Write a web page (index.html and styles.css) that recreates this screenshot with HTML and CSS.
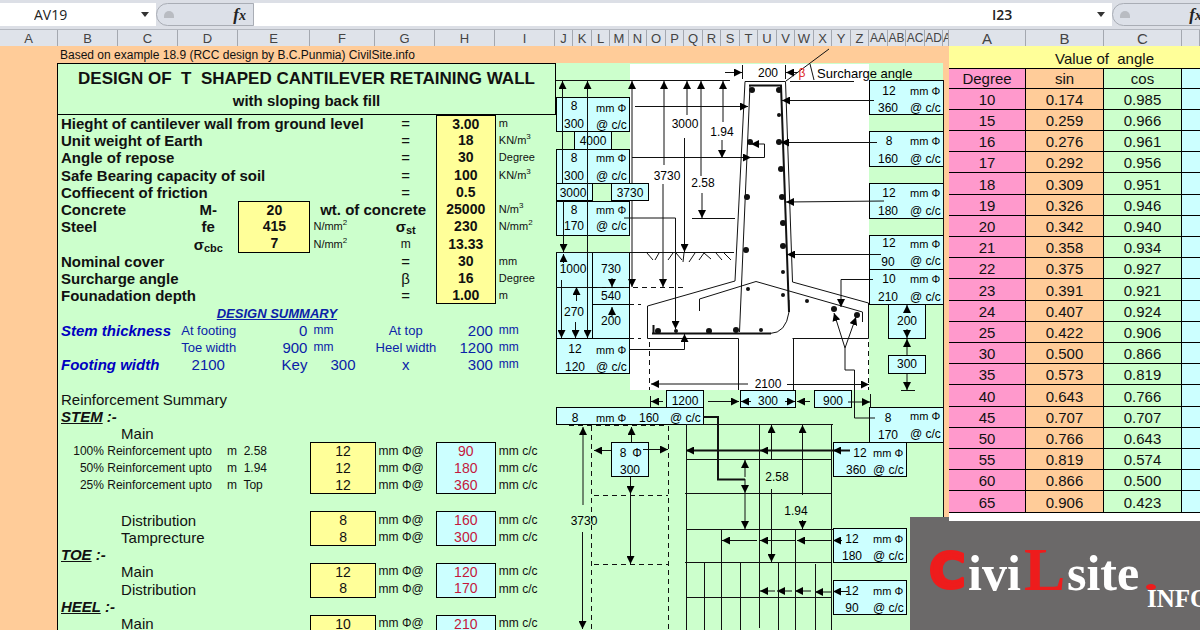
FILE: index.html
```
<!DOCTYPE html>
<html lang="en">
<head>
  <meta charset="UTF-8">
  <meta name="viewport" content="width=device-width, initial-scale=1.0">
  <title>Design of T Shaped Cantilever Retaining Wall</title>
  <link rel="stylesheet" href="styles.css">
</head>
<body>
  <div class="screen">

    <!-- design sheet -->
    <main class="book design">
      <div class="formula-bar">
        <input class="name-box" type="text" value="AV19" aria-label="Name box">
        <button class="drop" type="button" aria-label="Open name list"></button>
        <div class="fx-area"><span class="knob"></span><button class="fx" type="button">f<small>x</small></button></div>
        <input class="formula" type="text" aria-label="Formula">
      </div>
      <div class="heads">
        <span>A</span><span>B</span><span>C</span><span>D</span><span>E</span><span>F</span><span>G</span><span>H</span><span>I</span>
        <span>J</span><span>K</span><span>L</span><span>M</span><span>N</span><span>O</span><span>P</span><span>Q</span><span>R</span><span>S</span><span>T</span><span>U</span><span>V</span><span>W</span><span>X</span><span>Y</span><span>Z</span><span>AA</span><span>AB</span><span>AC</span><span>AD</span><span>A</span>
      </div>
      <div class="sheet">
        <section class="calc">
          <p class="source">Based on example 18.9 (RCC design by B.C.Punmia) CivilSite.info</p>
          <header class="title">
            <h1>DESIGN OF&nbsp; T&nbsp; SHAPED CANTILEVER RETAINING WALL</h1>
            <h2>with sloping back fill</h2>
          </header>
          <table class="data">
            <colgroup><col class="w60"><col class="w60"><col class="w60"><col class="w72"><col class="w65"><col class="w60"><col class="w60"><col class="w60"></colgroup>
            <tbody>
              <tr><th colspan="5">Hieght of cantilever wall from ground level</th><td class="mid">=</td><td class="in top">3.00</td><td class="unit">m</td></tr>
              <tr><th colspan="5">Unit weight of Earth</th><td class="mid">=</td><td class="in">18</td><td class="unit">KN/m<sup>3</sup></td></tr>
              <tr><th colspan="5">Angle of repose</th><td class="mid">=</td><td class="in">30</td><td class="unit">Degree</td></tr>
              <tr><th colspan="5">Safe Bearing capacity of soil</th><td class="mid">=</td><td class="in">100</td><td class="unit">KN/m<sup>3</sup></td></tr>
              <tr><th colspan="5">Coffiecent of friction</th><td class="mid">=</td><td class="in">0.5</td><td></td></tr>
              <tr><th colspan="2">Concrete</th><td class="mid bold">M-</td><td class="in top">20</td><td class="mid bold" colspan="2">wt. of concrete</td><td class="in">25000</td><td class="unit">N/m<sup>3</sup></td></tr>
              <tr><th colspan="2">Steel</th><td class="mid bold">fe</td><td class="in">415</td><td class="unit">N/mm<sup>2</sup></td><td class="mid bold">σ<sub>st</sub></td><td class="in">230</td><td class="unit">N/mm<sup>2</sup></td></tr>
              <tr><td colspan="2"></td><td class="mid bold">σ<sub>cbc</sub></td><td class="in bottom">7</td><td class="unit">N/mm<sup>2</sup></td><td class="mid small">m</td><td class="in">13.33</td><td></td></tr>
              <tr><th colspan="5">Nominal cover</th><td class="mid">=</td><td class="in">30</td><td class="unit">mm</td></tr>
              <tr><th colspan="5">Surcharge angle</th><td class="mid">β</td><td class="in">16</td><td class="unit">Degree</td></tr>
              <tr><th colspan="5">Founadation depth</th><td class="mid">=</td><td class="in bottom">1.00</td><td class="unit">m</td></tr>
              <tr class="blue"><td colspan="2"></td><td class="mid summary" colspan="3">DESIGN SUMMARY</td><td colspan="3"></td></tr>
              <tr class="blue"><th colspan="2">Stem thickness</th><td class="note">At footing</td><td class="num">0</td><td class="small">mm</td><td class="mid note">At top</td><td class="num">200</td><td class="small">mm</td></tr>
              <tr class="blue"><td colspan="2"></td><td class="note">Toe width</td><td class="num">900</td><td class="small">mm</td><td class="mid note tight">Heel width</td><td class="num">1200</td><td class="small">mm</td></tr>
              <tr class="blue"><th colspan="2">Footing width</th><td class="mid">2100</td><td class="num">Key</td><td class="mid">300</td><td class="mid">x</td><td class="num">300</td><td class="small">mm</td></tr>
              <tr><td colspan="8"></td></tr>
              <tr><td colspan="8">Reinforcement Summary</td></tr>
              <tr><td class="part" colspan="8"><u>STEM</u> :-</td></tr>
              <tr><td></td><td colspan="7">Main</td></tr>
              <tr><td class="small" colspan="4"><span class="upto">100% Reinforcement upto</span>m&nbsp; 2.58</td><td class="in dia top">12</td><td class="small">mm Φ@</td><td class="out top">90</td><td class="small">mm c/c</td></tr>
              <tr><td class="small" colspan="4"><span class="upto">50% Reinforcement upto</span>m&nbsp; 1.94</td><td class="in dia">12</td><td class="small">mm Φ@</td><td class="out">180</td><td class="small">mm c/c</td></tr>
              <tr><td class="small" colspan="4"><span class="upto">25% Reinforcement upto</span>m&nbsp; Top</td><td class="in dia bottom">12</td><td class="small">mm Φ@</td><td class="out bottom">360</td><td class="small">mm c/c</td></tr>
              <tr><td colspan="8"></td></tr>
              <tr><td></td><td colspan="3">Distribution</td><td class="in dia top">8</td><td class="small">mm Φ@</td><td class="out top">160</td><td class="small">mm c/c</td></tr>
              <tr><td></td><td colspan="3">Tamprecture</td><td class="in dia bottom">8</td><td class="small">mm Φ@</td><td class="out bottom">300</td><td class="small">mm c/c</td></tr>
              <tr><td class="part" colspan="8"><u>TOE</u> :-</td></tr>
              <tr><td></td><td colspan="3">Main</td><td class="in dia top">12</td><td class="small">mm Φ@</td><td class="out top">120</td><td class="small">mm c/c</td></tr>
              <tr><td></td><td colspan="3">Distribution</td><td class="in dia bottom">8</td><td class="small">mm Φ@</td><td class="out bottom">170</td><td class="small">mm c/c</td></tr>
              <tr><td class="part" colspan="8"><u>HEEL</u> :-</td></tr>
              <tr><td></td><td colspan="3">Main</td><td class="in dia top">10</td><td class="small">mm Φ@</td><td class="out top">210</td><td class="small">mm c/c</td></tr>
            </tbody>
          </table>
        </section>

        <!-- wall section and reinforcement drawing -->
        <svg class="drawing" viewBox="556 46 393 584" role="img" aria-label="Retaining wall section">
          <defs>
            <marker id="a" viewBox="0 0 8 8" refX="8" refY="4" markerWidth="8" markerHeight="8" markerUnits="userSpaceOnUse" orient="auto-start-reverse"><path d="M0 0L8 4L0 8z"/></marker>
          </defs>
          <rect class="green" x="556" y="63" width="387" height="567"/>
          <rect class="white" x="630" y="64" width="239" height="326"/>

          <g class="box">
            <rect x="556.5" y="97.5" width="73" height="34"/>
            <rect x="574.5" y="131.5" width="37" height="18"/>
            <rect x="556.5" y="149.5" width="73" height="34"/>
            <rect x="556.5" y="183.5" width="36" height="17"/>
            <rect x="611.5" y="183.5" width="37" height="17"/>
            <rect x="556.5" y="201.5" width="73" height="34"/>
            <rect x="556.5" y="252.5" width="36" height="86"/>
            <rect x="592.5" y="252.5" width="37" height="35"/>
            <rect x="592.5" y="287.5" width="37" height="17"/>
            <rect x="592.5" y="304.5" width="37" height="34"/>
            <rect x="556.5" y="338.5" width="73" height="35"/>
            <rect x="666.5" y="390.5" width="37" height="17"/>
            <rect x="740.5" y="390.5" width="55" height="17"/>
            <rect x="814.5" y="390.5" width="37" height="17"/>
            <rect x="556.5" y="407.5" width="147" height="17"/>
            <rect x="611.5" y="442.5" width="37" height="34"/>
            <rect x="869.5" y="80.5" width="74" height="34"/>
            <rect x="869.5" y="131.5" width="74" height="35"/>
            <rect x="869.5" y="183.5" width="74" height="35"/>
            <rect x="869.5" y="235.5" width="74" height="34"/>
            <rect x="869.5" y="269.5" width="74" height="35"/>
            <rect x="888.5" y="304.5" width="37" height="34"/>
            <rect x="888.5" y="355.5" width="37" height="18"/>
            <rect x="869.5" y="407.5" width="74" height="35"/>
            <rect x="833.5" y="442.5" width="73" height="34"/>
            <rect x="833.5" y="528.5" width="73" height="34"/>
            <rect x="833.5" y="580.5" width="73" height="34"/>
          </g>

          <!-- concrete outline -->
          <path class="ln" d="M738.5 390V338.5H647.5V306L735 281L745 81.5H785.5L792.5 282L868.5 303V338.5H792.5M793.5 338V390"/>
          <!-- bars -->
          <path class="ln" d="M739.5 332L750 85.5M789 300V312Q786 333 770 333.5"/>
          <path class="ln bar" d="M749 85.5H781L789 312M771 333.5H652M653.5 334V325"/>
          <path class="ln" d="M699.5 311V299L756 281.5L862.5 312V322"/>
          <g class="dots">
            <circle cx="752" cy="90" r="3"/><circle cx="779" cy="90" r="3"/><circle cx="779" cy="115" r="2"/><circle cx="750" cy="142" r="3"/><circle cx="779" cy="142" r="3"/><circle cx="781" cy="169" r="3"/><circle cx="747" cy="197" r="3"/><circle cx="782" cy="197" r="3"/><circle cx="783" cy="223" r="3"/><circle cx="746" cy="250" r="3"/><circle cx="783" cy="246" r="3"/><circle cx="783" cy="272" r="2"/><circle cx="748" cy="289" r="2"/><circle cx="783" cy="295" r="2"/><circle cx="807" cy="301" r="2"/><circle cx="834" cy="309" r="3"/><circle cx="857" cy="315" r="3"/><circle cx="658" cy="331" r="3"/><circle cx="676" cy="331" r="2"/><circle cx="709" cy="331" r="3"/><circle cx="736" cy="330" r="3"/><circle cx="761" cy="330" r="2"/>
          </g>

          <!-- ground line, ticks and frame -->
          <path class="ln" d="M556 80.5H730M556 252.5H734M692 218.5H735M742.5 65V79M785.5 65V79M786 81L829 49M810 64L814 80M790 81.5H854M943.5 80V520M901 390.5H915M650.5 396V407M870.5 394V408M556 287.5H592"/>
          <path class="ln" d="M647 253L653 260M659 253L655 260M673 253L668 260M676 253L682 260M684 253L683 262M695 253L689 262M704 253L699 260M704 253L711 259M716 253L722 260M724 253L731 260"/>
          <path class="ln dash" d="M597 287.5H684M629 304.5H641M629 338.5H641M649.5 342V390M868.5 342V390M569 425.5H668M591.5 426V630M668.5 426V630M594 495.5H668M594 564.5H668"/>

          <!-- dimension arrows -->
          <g class="ln arrow">
            <path d="M562.5 183V81"/><path d="M563.5 201V252"/><path d="M563.5 263V254"/><path d="M561.5 280V338"/>
            <path d="M587.5 338V81" class="both"/>
            <path d="M632 183V81"/><path d="M632 201V287"/>
            <path d="M664 165V81"/><path d="M663 184V287"/>
            <path d="M687 115V81"/><path d="M684.5 138V252"/>
            <path d="M701 176V81"/><path d="M702 193V218"/>
            <path d="M723 122V81"/><path d="M722 140V158"/>
            <path d="M635 106.5H748"/><path d="M632 157.5H751"/><path d="M751 157.5H764.5V144H751"/>
            <path d="M624 218H675.5V329"/>
            <path d="M612 278V287"/><path d="M612 316V307"/><path d="M576.5 301V287"/><path d="M575.5 322V338"/>
            <path d="M629 349.5H684.5V334"/>
            <path d="M725 72.5H742"/><path d="M798 72.5H786"/>
            <path d="M874 100.5H782"/><path d="M877 142.5H781"/><path d="M884 201L786 202"/><path d="M881 254.5H787"/><path d="M873 279.5H841V307"/>
            <path d="M845 348L834 313"/><path d="M845 348L856 317"/>
            <path d="M907 313V305"/><path d="M907 329V338"/><path d="M907 355V339"/><path d="M907 374V390"/>
            <path d="M748 384H651"/><path d="M787 384.5H869"/>
            <path d="M663 401.5H651"/><path d="M708 401.5H739"/><path d="M751 401.5H741"/><path d="M785 401.5H795"/><path d="M810 401.5H797"/><path d="M848 402H870"/>
            <path d="M583 505V427"/><path d="M582.5 532V629"/>
            <path d="M631.5 442V427"/><path d="M630.5 477V494"/><path d="M630.5 494V564"/><path d="M611 450.5H594"/><path d="M643 449.5H668"/>
            <path d="M745 477V460"/><path d="M745 479V493"/><path d="M745 493V529"/>
            <path d="M771.5 459V425"/><path d="M771.5 489V562"/><path d="M802.5 495V425"/><path d="M802.5 520V529"/>
            <path d="M757 540.5H722"/><path d="M795 540.5H760"/><path d="M832 540.5H797"/><path d="M842 540.5H833"/>
            <path d="M775 591H760"/><path d="M792 591H777"/><path d="M811 591H795"/><path d="M832 592H815"/><path d="M848 591.5H833"/>
          </g>
          <g class="ln arrow thick"><path d="M850 450.5H833"/><path d="M833 450.5H760"/><path d="M760 450.5H686"/></g>
          <path class="ln" d="M845 348V370H854.5V418H875"/>
          <path class="ln thick" d="M703 417H718V479.5H745"/>

          <!-- bar layout -->
          <path class="ln" d="M686 424.5H833M686 459.5H832M685 493.5H832M686 529.5H833M685 562.5H832M686 597.5H832M686.5 424V630M759.5 424V628M831.5 424V630M721.5 529V630M795.5 529V630M704.5 563V630M740.5 563V630M778.5 563V630M815.5 564V630"/>

          <g class="lbl">
            <text x="574" y="110">8</text><text x="574" y="128">300</text><text x="593" y="145">4000</text>
            <text x="574" y="162">8</text><text x="574" y="180">300</text><text x="573" y="197">3000</text><text x="630" y="197">3730</text>
            <text x="574" y="214">8</text><text x="574" y="230">170</text>
            <text x="573" y="273">1000</text><text x="611" y="273">730</text><text x="611" y="300">540</text><text x="611" y="325">200</text><text x="574" y="316">270</text>
            <text x="575" y="353">12</text><text x="575" y="371">120</text>
            <text x="685" y="128">3000</text><text x="722" y="136">1.94</text><text x="667" y="180">3730</text><text x="703" y="187">2.58</text>
            <text x="768" y="77">200</text><text class="red" x="802" y="77">β</text>
            <text x="889" y="95">12</text><text x="888" y="112">360</text><text x="889" y="145">8</text><text x="888" y="163">160</text>
            <text x="889" y="197">12</text><text x="888" y="215">180</text><text x="889" y="247">12</text><text x="888" y="266">90</text>
            <text x="889" y="283">10</text><text x="888" y="301">210</text><text x="907" y="325">200</text><text x="907" y="368">300</text>
            <text x="768" y="388">2100</text><text x="685" y="405">1200</text><text x="768" y="405">300</text><text x="833" y="405">900</text>
            <text x="575" y="422">8</text><text x="649" y="422">160</text><text x="888" y="422">8</text><text x="888" y="439">170</text>
            <text x="623" y="457">8</text><text x="637" y="457">Φ</text><text x="630" y="474">300</text><text x="584" y="525">3730</text>
            <text x="777" y="481">2.58</text><text x="796" y="515">1.94</text>
            <text x="860" y="457">12</text><text x="856" y="474">360</text><text x="852" y="543">12</text><text x="852" y="560">180</text><text x="852" y="595">12</text><text x="852" y="612">90</text>
          </g>
          <g class="mm">
            <text x="596" y="112">mm Φ</text><text x="596" y="129">@ c/c</text><text x="596" y="162">mm Φ</text><text x="596" y="180">@ c/c</text>
            <text x="596" y="214">mm Φ</text><text x="596" y="230">@ c/c</text><text x="596" y="354">mm Φ</text><text x="596" y="371">@ c/c</text>
            <text x="596" y="422">mm Φ</text><text x="670" y="422">@ c/c</text>
            <text x="910" y="95">mm Φ</text><text x="910" y="112">@ c/c</text><text x="910" y="145">mm Φ</text><text x="910" y="163">@ c/c</text>
            <text x="910" y="197">mm Φ</text><text x="910" y="215">@ c/c</text><text x="910" y="248">mm Φ</text><text x="910" y="265">@ c/c</text>
            <text x="910" y="283">mm Φ</text><text x="910" y="301">@ c/c</text><text x="910" y="420">mm Φ</text><text x="910" y="438">@ c/c</text>
            <text x="873" y="457">mm Φ</text><text x="873" y="474">@ c/c</text><text x="873" y="543">mm Φ</text><text x="873" y="560">@ c/c</text><text x="873" y="595">mm Φ</text><text x="873" y="612">@ c/c</text>
          </g>
          <text class="surcharge" x="817" y="78">Surcharge angle</text>
        </svg>
      </div>
    </main>

    <!-- angle values sheet -->
    <aside class="book angles">
      <div class="formula-bar">
        <input class="name-box" type="text" value="I23" aria-label="Name box">
        <button class="drop" type="button" aria-label="Open name list"></button>
        <div class="fx-area"><span class="knob"></span><button class="fx" type="button">f<small>x</small></button></div>
      </div>
      <div class="heads"><span>A</span><span>B</span><span>C</span><span></span></div>
      <table class="trig">
        <caption>Value of&nbsp; angle</caption>
        <colgroup><col class="w77"><col class="w78"><col class="w78"><col class="w18"></colgroup>
        <thead><tr><th>Degree</th><th>sin</th><th>cos</th><th></th></tr></thead>
        <tbody>
          <tr><td>10</td><td>0.174</td><td>0.985</td><td></td></tr>
          <tr><td>15</td><td>0.259</td><td>0.966</td><td></td></tr>
          <tr><td>16</td><td>0.276</td><td>0.961</td><td></td></tr>
          <tr><td>17</td><td>0.292</td><td>0.956</td><td></td></tr>
          <tr><td>18</td><td>0.309</td><td>0.951</td><td></td></tr>
          <tr><td>19</td><td>0.326</td><td>0.946</td><td></td></tr>
          <tr><td>20</td><td>0.342</td><td>0.940</td><td></td></tr>
          <tr><td>21</td><td>0.358</td><td>0.934</td><td></td></tr>
          <tr><td>22</td><td>0.375</td><td>0.927</td><td></td></tr>
          <tr><td>23</td><td>0.391</td><td>0.921</td><td></td></tr>
          <tr><td>24</td><td>0.407</td><td>0.924</td><td></td></tr>
          <tr><td>25</td><td>0.422</td><td>0.906</td><td></td></tr>
          <tr><td>30</td><td>0.500</td><td>0.866</td><td></td></tr>
          <tr><td>35</td><td>0.573</td><td>0.819</td><td></td></tr>
          <tr><td>40</td><td>0.643</td><td>0.766</td><td></td></tr>
          <tr><td>45</td><td>0.707</td><td>0.707</td><td></td></tr>
          <tr><td>50</td><td>0.766</td><td>0.643</td><td></td></tr>
          <tr><td>55</td><td>0.819</td><td>0.574</td><td></td></tr>
          <tr><td>60</td><td>0.866</td><td>0.500</td><td></td></tr>
          <tr><td>65</td><td>0.906</td><td>0.423</td><td></td></tr>
        </tbody>
      </table>
    </aside>

    <div class="logo">
      <svg viewBox="910 517 290 113" role="img" aria-label="Civilsite.info">
        <text class="logo-c" x="929" y="588">C</text>
        <text class="logo-w" x="968" y="590">ivi</text>
        <text class="logo-l" x="1024" y="590">L</text>
        <text class="logo-w" x="1067" y="590">site</text>
        <ellipse class="logo-dot" cx="1151" cy="587" rx="5" ry="3"/>
        <text class="logo-i" x="1147" y="607">INFO</text>
      </svg>
    </div>
  </div>
</body>
</html>
```
FILE: styles.css
```
:root {
  --green: #ccffcc;
  --orange: #ffcc99;
  --yellow: #ffff99;
  --cyan: #ccffff;
  --pink: #ff99cc;
  --head: #dfe3ea;
  --line: #000;
  --blue: #0a22a8;
}
* { box-sizing: border-box; margin: 0; padding: 0; }
body {
  font-family: "Liberation Sans", Arial, sans-serif;
  color: #111;
  background: #fff;
  overflow: hidden;
}
.screen {
  position: relative;
  display: grid;
  grid-template-columns: 949fr 251fr;
  height: 100vh;
  overflow: hidden;
}
.book { min-width: 0; overflow: hidden; }

/* formula bar */
.formula-bar {
  display: flex;
  height: 29px;
  padding: 3px 0;
  background: #dcdfe6;
}
.formula-bar input, .formula-bar button {
  border: 0;
  background: #fff;
  font-family: "Open Sans", sans-serif;
  font-size: 14px;
  color: #222;
  min-width: 0;
}
.formula-bar .name-box { width: 134px; padding-left: 34px; }
.drop { width: 22px; }
.drop::before {
  content: "";
  display: block;
  margin: 0 auto;
  width: 0;
  border: 4px solid transparent;
  border-top: 5px solid #333;
  border-bottom: 0;
}
.fx-area {
  display: flex;
  align-items: center;
  justify-content: space-between;
  width: 98px;
  padding: 0 7px;
  border: 1px solid #a9adb5;
  border-radius: 12px 0 0 12px;
  background: #dce0e8;
}
.knob {
  width: 10px;
  height: 7px;
  border-radius: 8px 8px 0 0;
  background: #b9bcc2;
}
.formula-bar .fx {
  background: none;
  font: italic bold 17px "Liberation Serif", serif;
}
.fx small { font-size: 14px; }
.formula { flex: 1; }

/* column letters */
.heads {
  display: grid;
  height: 17px;
  border-top: 1px solid #b4b8c0;
  background: var(--head);
  color: #444;
  font-size: 13px;
  line-height: 17px;
}
.heads span {
  border-right: 1px solid #a4a8b0;
  text-align: center;
  overflow: hidden;
  min-width: 0;
  white-space: nowrap;
}
.design .heads { grid-template-columns: 58fr 60fr 60fr 60fr 72fr 65fr 60fr 60fr 60fr repeat(10, 18fr 19fr) 18fr 6fr; }
.design .heads span:nth-child(n+27) { font-size: 12px; }

/* design sheet */
.sheet {
  display: grid;
  grid-template-columns: 57fr 499fr 393fr;
  background: var(--orange);
}
.calc { grid-column: 2; min-width: 0; }
.source {
  padding-left: 3px;
  font-size: 12px;
  line-height: 19px;
  height: 17px;
  white-space: nowrap;
}
.title {
  height: 52px;
  padding-top: 4px;
  border: 1px solid var(--line);
  background: var(--green);
  text-align: center;
  white-space: nowrap;
}
.title h1 { font-size: 17px; line-height: 22px; }
.title h2 { font-size: 15px; line-height: 22px; }
.data {
  width: 100%;
  table-layout: fixed;
  border-collapse: separate;
  border-spacing: 0;
  border-left: 1px solid var(--line);
  background: var(--green);
}
.w60 { width: 60px; }
.w65 { width: 65px; }
.w72 { width: 72px; }
.w77 { width: 77px; }
.w78 { width: 78px; }
.w18 { width: 18px; }
.data tr { height: 17px; }
.data tr:nth-child(4n) { height: 18px; }
.data th, .data td {
  padding: 0 3px;
  font-size: 15px;
  line-height: 15px;
  text-align: left;
  white-space: nowrap;
}
.data .mid { text-align: center; }
.data .num { text-align: right; }
.data .bold { font-weight: bold; }
.data .small { font-size: 12px; }
.data .note { font-size: 13px; }
.data .tight { padding: 0; }
.data .unit { font-size: 11px; }
.data sup { font-size: 8px; line-height: 0; }
.data sub { font-size: 11px; line-height: 0; vertical-align: -2px; }
.data .in, .data .out {
  padding: 0;
  border: 0 solid var(--line);
  border-width: 0 1px;
  background: var(--yellow);
  font-size: 14px;
  font-weight: bold;
  text-align: center;
}
.data .dia, .data .out { font-weight: normal; }
.data .out { background: var(--cyan); color: #c4183c; }
.data .top { border-top-width: 1px; }
.data .bottom { border-bottom-width: 1px; }
.blue { color: var(--blue); }
.blue th { font-style: italic; color: #0000c0; }
.data .summary {
  font-size: 13px;
  font-weight: bold;
  font-style: italic;
  text-decoration: underline;
}
.upto {
  display: inline-block;
  width: 151px;
  margin-right: 15px;
  text-align: right;
}
.data .part { font-weight: bold; font-style: italic; }

/* drawing */
.drawing { grid-column: 3; display: block; width: 100%; }
.green { fill: var(--green); }
.white { fill: #fff; }
.box rect { fill: var(--cyan); stroke: var(--line); }
.ln { fill: none; stroke: #111; stroke-width: 1; }
.bar { stroke-width: 2; }
.thick { stroke-width: 2; }
.dash { stroke-dasharray: 5 4; }
.arrow path { marker-end: url(#a); }
.arrow .both { marker-start: url(#a); }
.dots { fill: #111; }
.lbl { font-size: 12px; text-anchor: middle; }
.mm { font-size: 11px; }
.mm text:nth-child(even) { font-size: 12px; }
.surcharge { font-size: 13px; }
.red { fill: #d22; }

/* angle sheet */
.angles { z-index: 2; }
.formula-bar .name-box { flex: none; }
.drop, .fx-area { flex: none; }
.angles .formula-bar .name-box { width: 141px; padding-left: 43px; font-weight: 600; }
.angles .heads { grid-template-columns: 77fr 78fr 78fr 18fr; font-size: 15px; }
.trig {
  width: 100%;
  table-layout: fixed;
  border-collapse: separate;
  border-spacing: 0;
  border-bottom: 8px solid #fff;
}
.trig caption {
  height: 22px;
  padding-left: 60px;
  background: var(--yellow);
  font-size: 15px;
  line-height: 26px;
}
.trig tr { height: 21px; }
.trig tbody tr:nth-child(5n) { height: 22px; }
.trig th, .trig td {
  border-right: 1px solid var(--line);
  border-bottom: 1px solid var(--line);
  font-size: 15px;
  font-weight: normal;
  line-height: 20px;
  text-align: center;
}
.trig td { padding-top: 1px; line-height: 19px; }
.trig th { border-top: 1px solid var(--line); line-height: 19px; }
.trig tr > :nth-child(1) { background: var(--pink); }
.trig tr > :nth-child(2) { background: var(--orange); }
.trig tr > :nth-child(3) { background: var(--green); }
.trig tr > :nth-child(4) { background: var(--cyan); border-right: 0; }

/* logo over the sheet corner */
.logo {
  position: absolute;
  right: 0;
  bottom: 0;
  z-index: 1;
  width: 290px;
  background: #6b6969;
}
.logo svg { display: block; width: 100%; }
.logo text { font-family: "Liberation Serif", serif; font-weight: bold; fill: #fff; }
.logo .logo-c {
  font-family: "DejaVu Sans", sans-serif;
  font-size: 50px;
  fill: #ee1c1c;
  stroke: #ee1c1c;
  stroke-width: 3;
  stroke-linejoin: round;
}
.logo-w { font-size: 50px; }
.logo .logo-l { font-size: 62px; fill: #ee1c1c; }
.logo-dot { fill: #ee1c1c; }
.logo-i { font-size: 25px; }
```
